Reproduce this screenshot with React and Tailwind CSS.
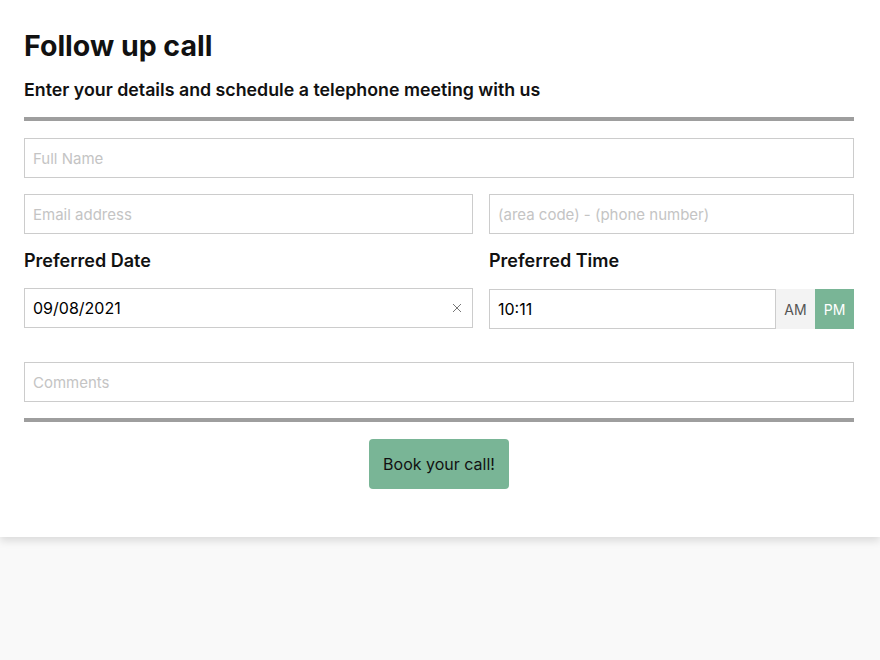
import React, { useState } from 'react';

const inputCls =
  "w-full h-10 border border-[#cccccc] px-2 text-[15px] text-black placeholder:text-[#c4c4c4] outline-none bg-white";

export default function App() {
  const [date, setDate] = useState('09/08/2021');
  const [meridiem, setMeridiem] = useState('PM');

  return (
    <div className="min-h-[660px] bg-[#f9f9f9] font-['Inter',sans-serif]">
      <div className="bg-white pl-6 pr-[26px] pt-[28px] pb-[48px] shadow-[0_4px_8px_rgba(0,0,0,0.12)]">
        <h1 className="text-[28.5px] font-bold leading-[36px] text-[#111]">Follow up call</h1>
        <h2 className="mt-[15px] text-[17.8px] font-semibold leading-[22px] text-[#111]">
          Enter your details and schedule a telephone meeting with us
        </h2>
        <div className="mt-[16px] h-1 bg-[#9e9e9e]" />

        <div className="mt-[17px]">
          <input className={inputCls} placeholder="Full Name" />
        </div>

        <div className="mt-4 grid grid-cols-[449fr_365fr] gap-4">
          <input className={inputCls} placeholder="Email address" />
          <input className={inputCls} placeholder="(area code) - (phone number)" />
        </div>

        <div className="mt-[16px] grid grid-cols-[449fr_365fr] gap-4">
          <div>
            <label className="block text-[18px] font-semibold leading-[22px] text-[#111]">Preferred Date</label>
            <div className="relative mt-[16px]">
              <input
                className={inputCls + " text-[16px]"}
                value={date}
                onChange={(e) => setDate(e.target.value)}
              />
              {date && (
                <button
                  onClick={() => setDate('')}
                  className="absolute right-[11px] top-1/2 -translate-y-1/2 text-[#777]"
                >
                  <svg width="10" height="10" viewBox="0 0 10 10" fill="none" stroke="currentColor" strokeWidth="1">
                    <path d="M1 1L9 9M9 1L1 9" />
                  </svg>
                </button>
              )}
            </div>
          </div>
          <div>
            <label className="block text-[18px] font-semibold leading-[22px] text-[#111]">Preferred Time</label>
            <div className="mt-[17px] flex h-10">
              <input className={inputCls + " flex-1 text-[16px]"} defaultValue="10:11" />
              <button
                onClick={() => setMeridiem('AM')}
                className={
                  "w-[39px] text-[14px] " +
                  (meridiem === 'AM' ? "bg-[#79b596] text-white" : "bg-[#f3f3f3] text-[#555]")
                }
              >
                AM
              </button>
              <button
                onClick={() => setMeridiem('PM')}
                className={
                  "w-[39px] text-[14px] " +
                  (meridiem === 'PM' ? "bg-[#79b596] text-white" : "bg-[#f3f3f3] text-[#555]")
                }
              >
                PM
              </button>
            </div>
          </div>
        </div>

        <div className="mt-[33px]">
          <input className={inputCls} placeholder="Comments" />
        </div>

        <div className="mt-4 h-1 bg-[#9e9e9e]" />

        <div className="mt-[17px] flex justify-center">
          <button className="h-[50px] w-[140px] rounded-[4px] bg-[#79b596] text-[16px] text-[#111]">
            Book your call!
          </button>
        </div>
      </div>
    </div>
  );
}
